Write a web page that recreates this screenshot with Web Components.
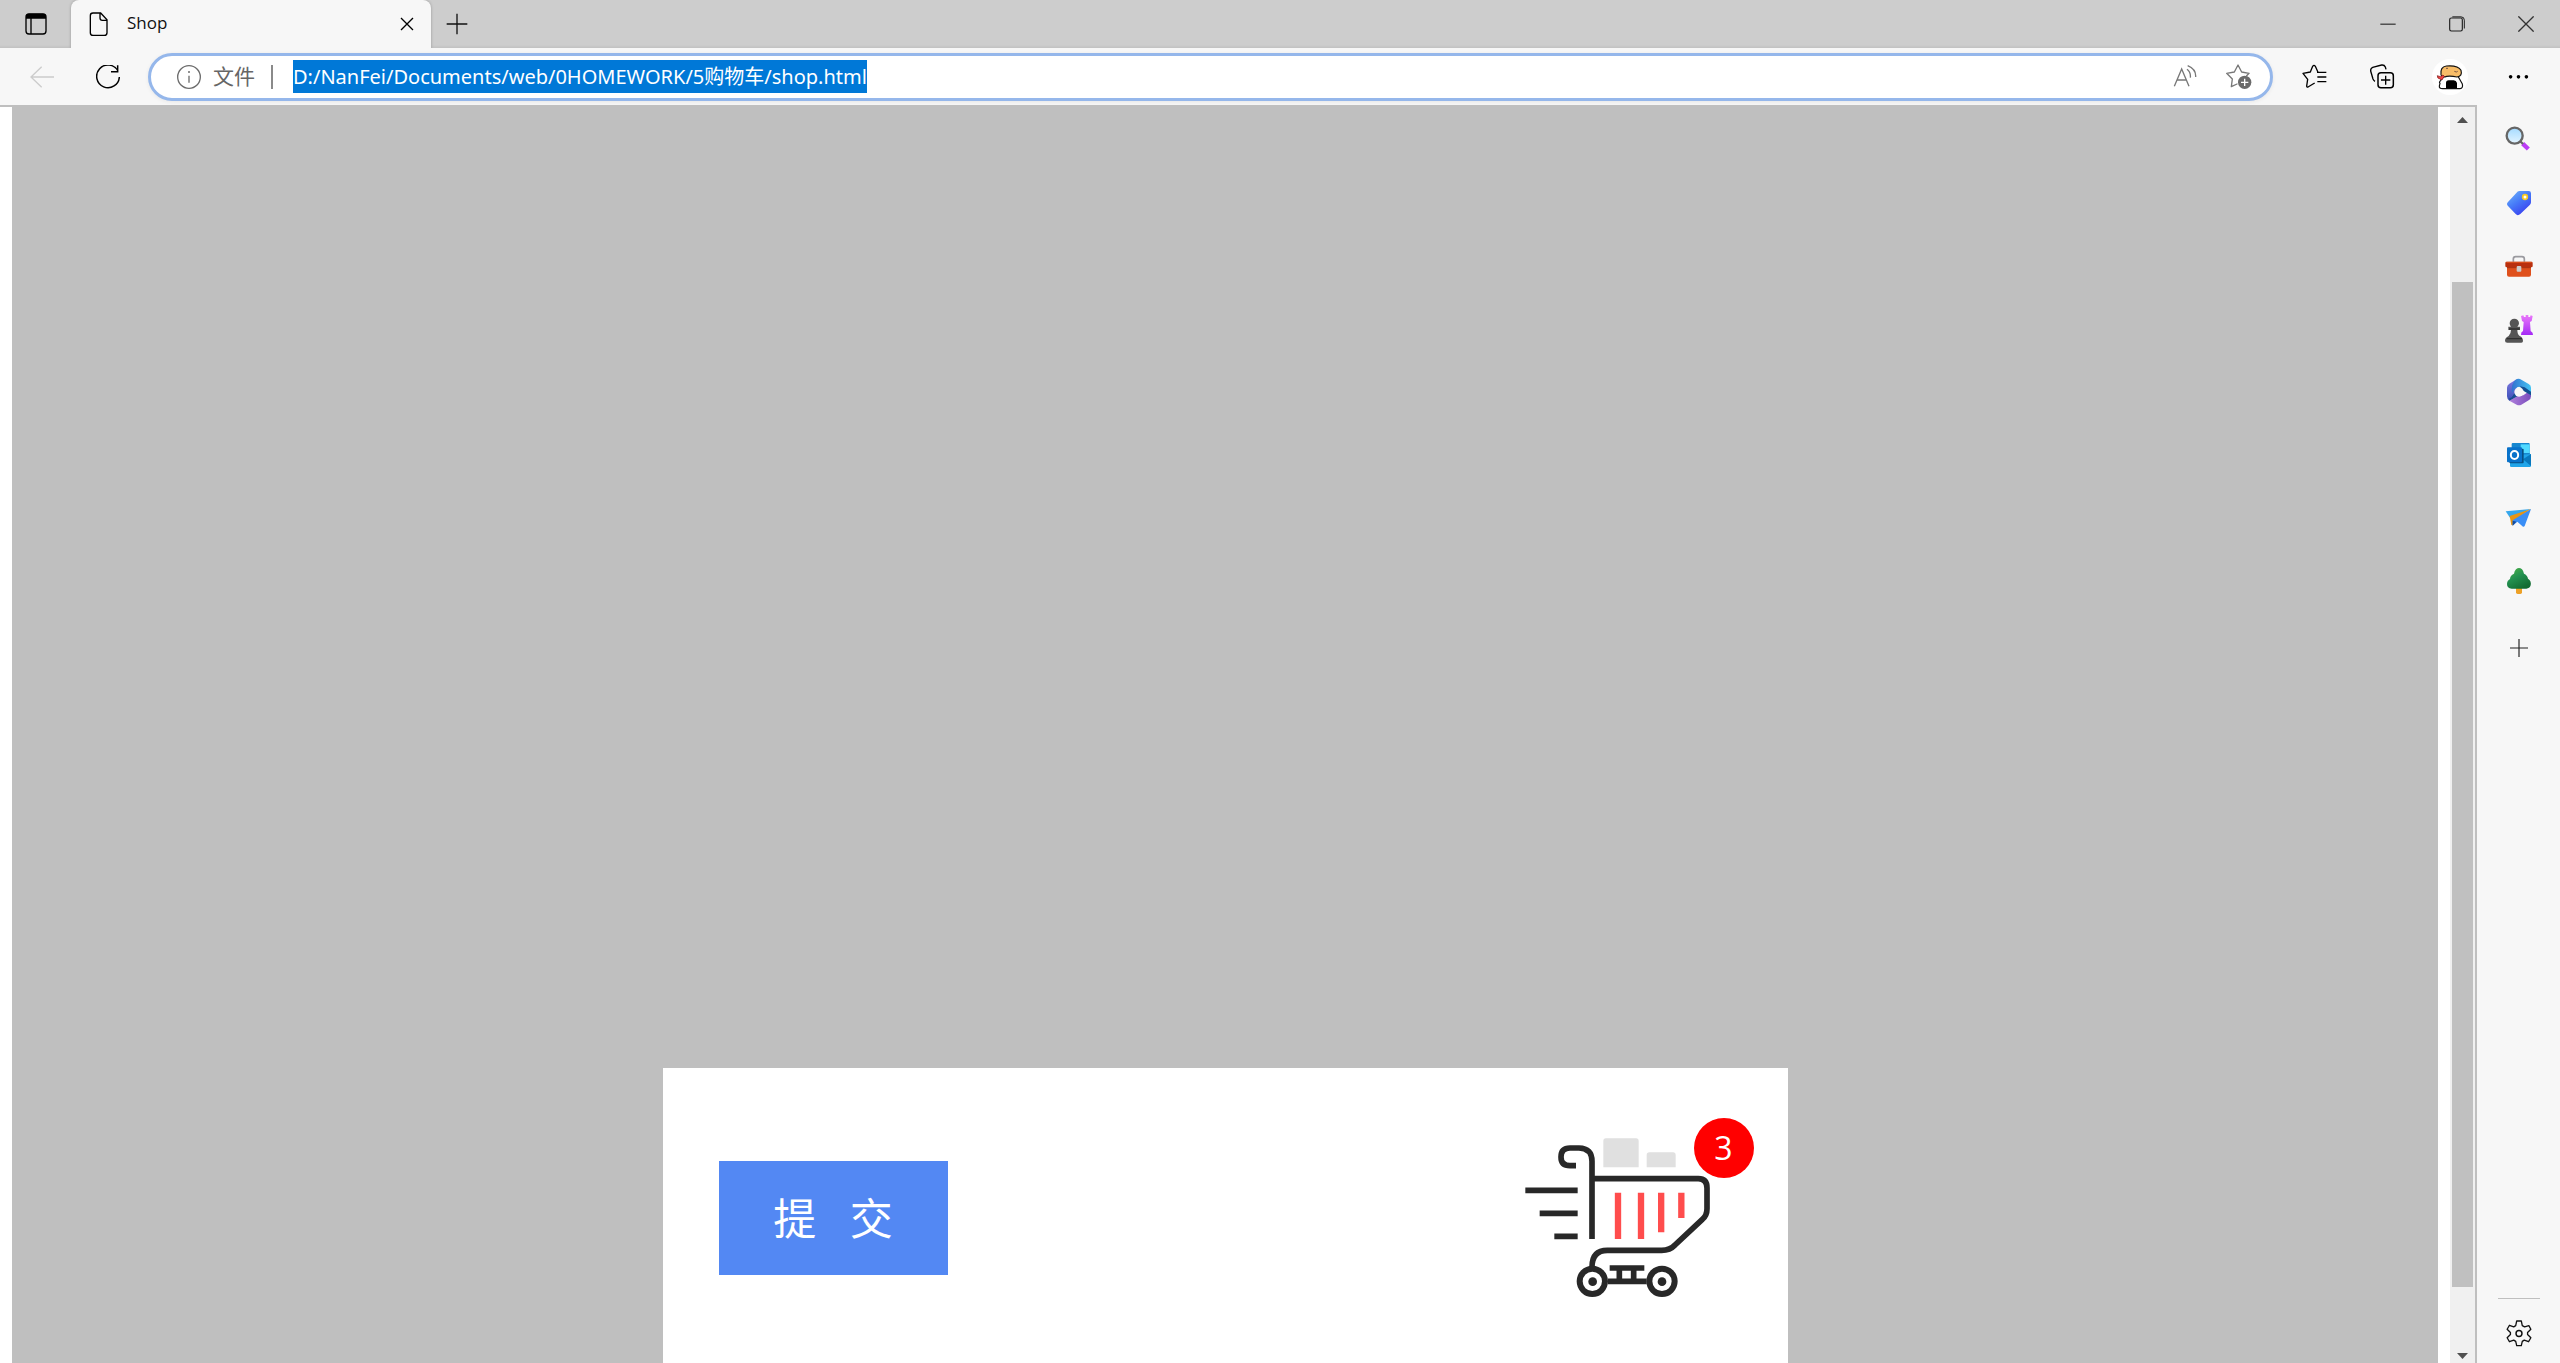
<!DOCTYPE html>
<html lang="zh-CN">
<head>
<meta charset="utf-8">
<title>Shop</title>
<style>
html,body{height:100%;margin:0}
body{font-family:"Open Sans","Noto Sans CJK SC",sans-serif;overflow:hidden;background:#f7f7f7;color:#111}
</style>
</head>
<body>
<browser-window>
  <tab-strip slot="tabs"><browser-tab>Shop</browser-tab></tab-strip>
  <tool-bar slot="toolbar" address="D:/NanFei/Documents/web/0HOMEWORK/5购物车/shop.html"></tool-bar>
  <page-view><shop-card><submit-button slot="action">提   交</submit-button><shopping-cart slot="cart">3</shopping-cart></shop-card></page-view>
  <side-bar slot="side"></side-bar>
</browser-window>
<script>
const ICONS = {
tabs:['72 36 72 72',`<rect x="78" y="42" width="60" height="60" rx="9" fill="none" stroke="#000" stroke-width="4"/><path d="M78 56V50q0-9 9-9h42q9 0 9 9v6zM91 56h4v46h-4z"/>`],
file:['262 36 72 72',`<path d="M280 39h23l19 20v39q0 8-8 8h-34q-8 0-8-8V47q0-8 8-8zM301 40v14q0 7 7 7h14" fill="none" stroke="#000" stroke-width="4"/>`],
close:['1197 51 48 48',`<path d="M1203 57l36 36m0-36l-36 36" stroke="#000" stroke-width="4"/>`],
plus:['1337 37 66 66',`<path d="M1339 70h62M1370 39v62" stroke="#111" stroke-width="4"/>`],
min:['751 46 48 48',`<path d="M752 70.500h46" stroke="#111" stroke-width="3"/>`],
restore:['957 46 48 48',`<rect x="959" y="52" width="38" height="39" rx="5" fill="none" stroke="#222" stroke-width="3.500"/><path d="M967 48.500h26q10 0 10 10v25" fill="none" stroke="#222" stroke-width="3"/>`],
winclose:['1165 47 48 48',`<path d="M1166 48l46 46m0-46l-46 46" stroke="#333" stroke-width="4"/>`],
back:['90 191 72 72',`<path d="M162 227H92M125 196L93 227l32 31" fill="none" stroke="#ccc" stroke-width="4"/>`],
refresh:['288 193 72 72',`<path d="M354 211A34 34 0 1 0 358 229M353 194v19h-20" fill="none" stroke="#000" stroke-width="4.500"/>`],
info:['531 194 72 72',`<circle cx="567" cy="230" r="34" fill="none" stroke="#6c6c6c" stroke-width="4"/><path d="M567 226v21" stroke="#6c6c6c" stroke-width="4"/><circle cx="567" cy="215" r="3" fill="#6c6c6c"/>`],
read:['128 193 72 72',`<path d="M132 257l22-52 22 52M140 238h28M170 206q12 9 10 25M172 195q26 11 24 34" fill="none" stroke="#777" stroke-width="4"/>`],
staradd:['288 195 78 78',`<path d="M357 223l-22-4-11-21-11 21-23 4 17 17-3 23 17-8M357 223l-7 7" fill="none" stroke="#777" stroke-width="4" stroke-linejoin="round" stroke-linecap="round"/><circle cx="344" cy="250" r="20" fill="#6b6b6b"/><path d="M333 250h22M344 239v22" stroke="#fff" stroke-width="4"/>`],
favs:['519 193 75 75',`<path d="M567 218l-8-18q-4-6-8 0l-7 17-22 4 14 18-3 20q0 4 4 3l20-12M564 218h28M565 232h27M565 246h27" fill="none" stroke="#000" stroke-width="4" stroke-linejoin="round"/>`],
collect:['717 193 75 75',`<rect x="741" y="219" width="46" height="45" rx="9" fill="none" stroke="#000" stroke-width="4.500"/><path d="M732 245q-4-2-6-7l-7-24q-1-8 6-11l27-7q8-1 11 6l2 7M764 228v27M750 241h28" fill="none" stroke="#000" stroke-width="4"/>`],
avatar:['906 177 108 108',`<circle cx="960" cy="231" r="54" fill="#fff"/><path d="M930 250q-4-2 2-9l10-14q4-5 9-5h24q6 0 9 7l13 23q3 13-7 14h-52q-11 0-10-8z" fill="#fff" stroke="#111" stroke-width="3.500"/><path d="M948 265v-16q0-8 8-8h15q8 0 10 8v16z"/><path d="M933 224q-3-23 16-26 35-3 44 13 5 17-12 20-18-4-31-2-15 5-17-5z" fill="#f8bd68" stroke="#111" stroke-width="3.500"/><path d="M922 227l9 3 8-5 4 4-7 11-8-4q-6 0-6-9z" fill="#f04444" stroke="#711" stroke-width="2"/><path d="M973 214q7 4 10 0M948 205h6" fill="none" stroke="#754" stroke-width="3"/>`],
more:['1130 194 70 70',`<circle cx="1141" cy="230" r="5.500"/><circle cx="1165" cy="230" r="5.500"/><circle cx="1189" cy="230" r="5.500"/>`],
search:['222 72 90 90',`<defs><linearGradient id="g" x2="0" y2="1"><stop stop-color="#a4daff"/><stop offset="1" stop-color="#e4f5ff"/></linearGradient></defs><path d="M278 131l17 16" stroke="#bb3cf6" stroke-width="13"/><path d="M270 123l9 9" stroke="#666" stroke-width="7"/><circle cx="254" cy="107" r="24" fill="url(#g)" stroke="#666" stroke-width="7"/>`],
tag:['222 261 90 90',`<defs><linearGradient id="g" x2=".7" y2="1"><stop stop-color="#73b7fa"/><stop offset=".5" stop-color="#477cf8"/><stop offset="1" stop-color="#393eef"/></linearGradient></defs><path d="M268 273h28q7 0 7 7v27q0 4-3 7l-29 28q-8 7-14 0l-23-24q-6-6 0-12l25-27q4-6 9-6z" fill="url(#g)"/><circle cx="285" cy="291" r="7" fill="#fff" stroke="#f6ca24" stroke-width="5"/>`],
toolbox:['222 450 90 90',`<path d="M250 485v-8q0-7 7-7h19q7 0 7 7v8" fill="none" stroke="#9a9a9f" stroke-width="5"/><path d="M231 496h72v28q0 6-6 6h-60q-6 0-6-6z" fill="#df501c"/><rect x="226" y="485" width="82" height="17" rx="4" fill="#b9300f"/><path d="M229 487h76" stroke="#e0551f" stroke-width="3"/><path d="M231 503h72" stroke="#8f270f" stroke-width="2"/><rect x="260" y="498" width="14" height="17" rx="3" fill="#ccc"/>`],
chess:['222 639 90 90',`<defs><linearGradient id="g" x2="0" y2="1"><stop stop-color="#ea78fa"/><stop offset="1" stop-color="#a42af5"/></linearGradient></defs><path d="M273 648l7-2 2 5h5v-6h8v6h5l2-5 6 2-3 15-5 3 2 27q8 4 7 12h-36q-1-9 6-12l2-27-5-3z" fill="url(#g)"/><path d="M239 670a14 14 0 1 1 28 0q0 6-5 10h8v10h-8q0 13 7 18 10 4 10 15 0 5-5 5h-42q-7 0-7-6 0-9 11-14 7-7 7-18h-8v-10h8q-4-4-4-10z" fill="#555"/><path d="M230 716h46M237 687h32" stroke="#303030" stroke-width="4"/>`],
m365:['222 48 90 90',`<defs><linearGradient id="g" x2="0" y2="1"><stop stop-color="#7f7ae0"/><stop offset="1" stop-color="#3a4fb8"/></linearGradient><linearGradient id="b"><stop stop-color="#3172cf"/><stop offset="1" stop-color="#43c4f3"/></linearGradient><linearGradient id="p"><stop stop-color="#b080dc"/><stop offset="1" stop-color="#7a4cbc"/></linearGradient></defs><path d="M260 58l-22 13q-7 4-7 12v26q0 8 7 13l22-13V72z" fill="url(#g)"/><path d="M238 122l22-13 20-3 23-16v19q0 8-7 12l-22 13q-7 3-14 0z" fill="url(#p)"/><path d="M256 60q9-7 18-1l22 13q7 4 7 11v23l-25-18-11-8-13 6-8 14q-4-28 10-40z" fill="url(#b)"/><path d="M303 106l-27-16-6-11 14 3 19 13z" fill="#134f91"/><path d="M238 122l25-14-10-8-5 8q-2 6-10 7z" fill="#194d91"/><circle cx="267" cy="96" r="14" fill="#f7f7f7"/>`],
outlook:['222 237 90 90',`<rect x="245" y="249" width="54" height="64" rx="3" fill="#1687d0"/><path d="M272 253h27v26h-27z" fill="#50d9ff"/><path d="M250 279h49v22h-49z" fill="#1688cf"/><path d="M240 287l63-5v35q0 4-4 4h-55q-4 0-4-4z" fill="#20a5e9"/><path d="M279 298l24-16v36z" fill="#0878bd"/><rect x="238" y="266" width="43" height="44" rx="3" fill="#075084"/><rect x="231" y="262" width="45" height="45" rx="3" fill="#0872ca"/><ellipse cx="253.500" cy="285" rx="11" ry="12" fill="none" stroke="#fff" stroke-width="6"/>`],
plane:['222 426 90 90',`<path d="M227 454l76-7-63 26z" fill="#35a7ed"/><path d="M239 468l64-21-52 37-2 12-5-1z" fill="#e89513"/><path d="M303 447l-55 34v16l14-12 17 15q3 1 5-2z" fill="#398ef6"/><path d="M248 497v-15l11 3z" fill="#144b9e"/>`],
tree:['222 615 90 90',`<defs><linearGradient id="g" x2=".6" y2="1"><stop stop-color="#50b445"/><stop offset=".5" stop-color="#239150"/><stop offset="1" stop-color="#126c32"/></linearGradient></defs><path d="M258 680h18v17q0 5-5 5h-8q-5 0-5-5z" fill="#eda127"/><path d="M258 628q9-8 18 0 5 6 6 13 10 4 12 15 11 7 8 20-3 10-13 10h-44q-14-1-14-14 0-10 9-15 0-11 12-16 1-8 6-13z" fill="url(#g)"/>`],
add:['222 825 84 84',`<path d="M237 867h54M264 840v54" stroke="#222" stroke-width="3.500"/>`],
gear:['316 240 78 82',`<path d="M348 243h14l3 14 7 4 13-4 6 11-10 10v6l10 10-7 12-13-5-6 4-3 13h-14l-3-13-6-4-13 5-7-12 10-10v-6l-10-10 7-12 13 5 6-4z" fill="none" stroke="#111" stroke-width="4" stroke-linejoin="round"/><circle cx="355" cy="281" r="9" fill="none" stroke="#111" stroke-width="4.500"/>`]
};
const define = (name, html, setup) => {
  const template = document.createElement('template');
  template.innerHTML = html;
  customElements.define(name, class extends HTMLElement {
    constructor(){ super(); this.attachShadow({mode:'open'}).append(template.content.cloneNode(true)); }
    connectedCallback(){ if(setup) setup(this, this.shadowRoot); }
  });
};
define('ui-icon', `<style>:host{display:inline-flex;flex:none}svg{display:block}</style><span></span>`, (el, root) => {
  const [box, body] = ICONS[el.getAttribute('name')];
  const size = box.split(' ');
  root.querySelector('span').innerHTML = `<svg aria-hidden="true" viewBox="${box}" width="${Math.round(size[2]/3)}" height="${Math.round(size[3]/3)}">${body}</svg>`;
});
define('icon-button', `<style>:host{display:flex;flex:none}button{flex:1;display:flex;align-items:center;justify-content:center;border:0;padding:0;background:none}</style><button type="button"></button>`, (el, root) => {
  const icon = document.createElement('ui-icon');
  icon.setAttribute('name', el.getAttribute('icon'));
  const button = root.querySelector('button');
  button.replaceChildren(icon);
  button.setAttribute('aria-label', el.getAttribute('label'));
});
define('browser-window', `<style>:host{display:flex;flex-direction:column;height:100vh}.body{display:flex;flex:1;min-height:0}</style>
<slot name="tabs"></slot><slot name="toolbar"></slot><div class="body"><slot></slot><slot name="side"></slot></div>`);
define('tab-strip', `<style>:host{display:flex;flex:none;height:48px;background:radial-gradient(closest-side at 50% 0,#c3c3c3 60%,#c3c3c300) top center/400px 11px no-repeat,linear-gradient(#cdcdcd 45px,#c1c1c1)}icon-button{width:52px;padding-bottom:1px}.menu{width:71px;box-sizing:border-box;padding-left:1px}.window{display:flex;margin-left:auto}.window icon-button{width:69px}</style>
<icon-button class="menu" icon="tabs" label="标签页操作"></icon-button><slot></slot><icon-button icon="plus" label="新建标签页"></icon-button>
<div class="window"><icon-button icon="min" label="最小化"></icon-button><icon-button icon="restore" label="还原"></icon-button><icon-button icon="winclose" label="关闭"></icon-button></div>`);
define('browser-tab', `<style>:host{display:flex;align-items:center;box-sizing:border-box;width:360px;padding:0 16px;gap:16px;background:#f7f7f7;border-radius:8px 8px 0 0;font-size:17px;line-height:24px;box-shadow:0 0 3px #0004;clip-path:inset(0 -4px 0 -4px)}span{flex:1;padding-bottom:2px}</style>
<ui-icon name="file"></ui-icon><span><slot></slot></span><icon-button icon="close" label="关闭标签页"></icon-button>`);
define('tool-bar', `<style>:host{display:flex;flex:none;align-items:center;box-sizing:border-box;height:57px;padding:0 8px 0 9px;background:#f7f7f7}.nav{width:66px}.tool{width:68px}
.box{display:flex;flex:1;align-items:center;box-sizing:border-box;height:48px;margin:0 7px;padding:0 4px 0 26px;border:3px solid #95b7eb;border-radius:24px;background:#fff;box-shadow:0 1px 4px #0001}
label{margin-left:12px;padding-bottom:2px;font-size:21px;line-height:30px;color:#666}i{width:2px;height:24px;margin:0 20px 0 16px;background:#8a8a8a}
input{field-sizing:content;box-sizing:border-box;height:33px;border:0;padding:0 0 2px;outline:0;background:#0078d7;color:#fff;font:20px "Noto Sans","Noto Sans CJK SC",sans-serif}.end{display:flex;margin-left:auto}.end icon-button{width:54px}</style>
<icon-button class="nav" icon="back" label="后退"></icon-button><icon-button class="nav" icon="refresh" label="刷新"></icon-button>
<div class="box"><ui-icon name="info"></ui-icon><label for="url">文件</label><i></i><input id="url" type="text" spellcheck="false"><div class="end"><icon-button icon="read" label="大声朗读"></icon-button><icon-button icon="staradd" label="添加到收藏夹"></icon-button></div></div>
<icon-button class="tool" icon="favs" label="收藏夹"></icon-button><icon-button class="tool" icon="collect" label="集锦"></icon-button><icon-button class="tool" icon="avatar" label="个人资料"></icon-button><icon-button class="tool" icon="more" label="设置及其他"></icon-button>`, (el, root) => { root.querySelector('input').value = el.getAttribute('address'); });
define('page-view', `<style>:host{display:flex;flex:1;min-width:0;border:solid #bfbfbf;border-width:2px 2px 0 0;background:#fff}.page{display:flex;flex:1;flex-direction:column;justify-content:flex-end;align-items:center;margin:0 12px;background:#bfbfbf}</style><div class="page"><slot></slot></div><scroll-bar></scroll-bar>`);
define('scroll-bar', `<style>:host{display:flex;flex-direction:column;align-items:center;box-sizing:border-box;width:25px;padding:10px 0 4px;background:#f0f0f0}svg{display:block;flex:none}.track{display:flex;flex:1;flex-direction:column;width:21px}.thumb{flex:1004;background:#c0c0c0}.before{flex:159}.after{flex:66}</style>
<svg width="11" height="6"><path d="M0 6l5.500-6L11 6z" fill="#505050"/></svg><div class="track"><div class="before"></div><div class="thumb"></div><div class="after"></div></div><svg width="11" height="6"><path d="M0 0l5.500 6L11 0z" fill="#505050"/></svg>`);
define('shop-card', `<style>:host{display:flex;align-items:center;justify-content:space-between;box-sizing:border-box;width:1125px;max-width:100%;padding:70px 77px 65px 56px;background:#fff}</style><slot name="action"></slot><slot name="cart"></slot>`);
define('submit-button', `<style>:host{display:block}button{width:229px;height:114px;border:0;padding:2px 0 0;background:#5388f3;color:#fff;font:43px/60px "Open Sans","Noto Sans CJK SC",sans-serif;white-space:pre}</style><button type="submit"><slot></slot></button>`);
define('shopping-cart', `<style>:host{display:block;position:relative}svg{display:block}.badge{position:absolute;top:-20px;right:-43px;width:60px;height:60px;border-radius:50%;background:#f00;color:#fff;font-size:32px;line-height:60px;text-align:center}</style>
<svg width="186" height="160" viewBox="75 140 558 480" role="img" aria-label="购物车"><path d="M310 228v-79q0-8 8-8h90q8 0 8 8v79zM440 228v-37q0-8 8-8h71q8 0 8 8v37z" fill="#e0e0e0"/><g fill="none" stroke="#282828" stroke-width="18"><path d="M76 297h157M119 366h114M163 435h70M276 443V210q0-39-39-40h-27q-27 0-27 27 0 26 27 26h18M276 262h319q26 0 26 28v62q0 20-14 32l-82 77q-15 16-40 16H322q-46 0-46 50v8M329 530h104M324 570h116M358 530v40M401 530v40" stroke-width="17"/><circle cx="277" cy="570" r="38"/><circle cx="486" cy="570" r="38"/></g><circle cx="278" cy="571" r="13" fill="#282828"/><circle cx="486" cy="571" r="13" fill="#282828"/><path d="M354 304v139M423 304v139M483.500 304v119M544 304v76" stroke="#ff4d4d" stroke-width="19"/></svg><div class="badge"><slot></slot></div>`);
define('side-bar', `<style>:host{display:flex;flex:none;flex-direction:column;box-sizing:border-box;width:83px;padding-top:2px;background:#f7f7f7}icon-button{height:63px}.add{margin-top:5px}hr{width:42px;height:1px;margin:auto auto 4px;border:0;background:#bfbfbf}.gear{height:60px}</style>
<icon-button icon="search" label="搜索"></icon-button><icon-button icon="tag" label="购物"></icon-button><icon-button icon="toolbox" label="工具"></icon-button><icon-button icon="chess" label="游戏"></icon-button><icon-button icon="m365" label="Microsoft 365"></icon-button><icon-button icon="outlook" label="Outlook"></icon-button><icon-button icon="plane" label="Drop"></icon-button><icon-button icon="tree" label="电子树"></icon-button><icon-button class="add" icon="add" label="自定义"></icon-button><hr><icon-button class="gear" icon="gear" label="设置"></icon-button>`);
</script>
</body>
</html>
